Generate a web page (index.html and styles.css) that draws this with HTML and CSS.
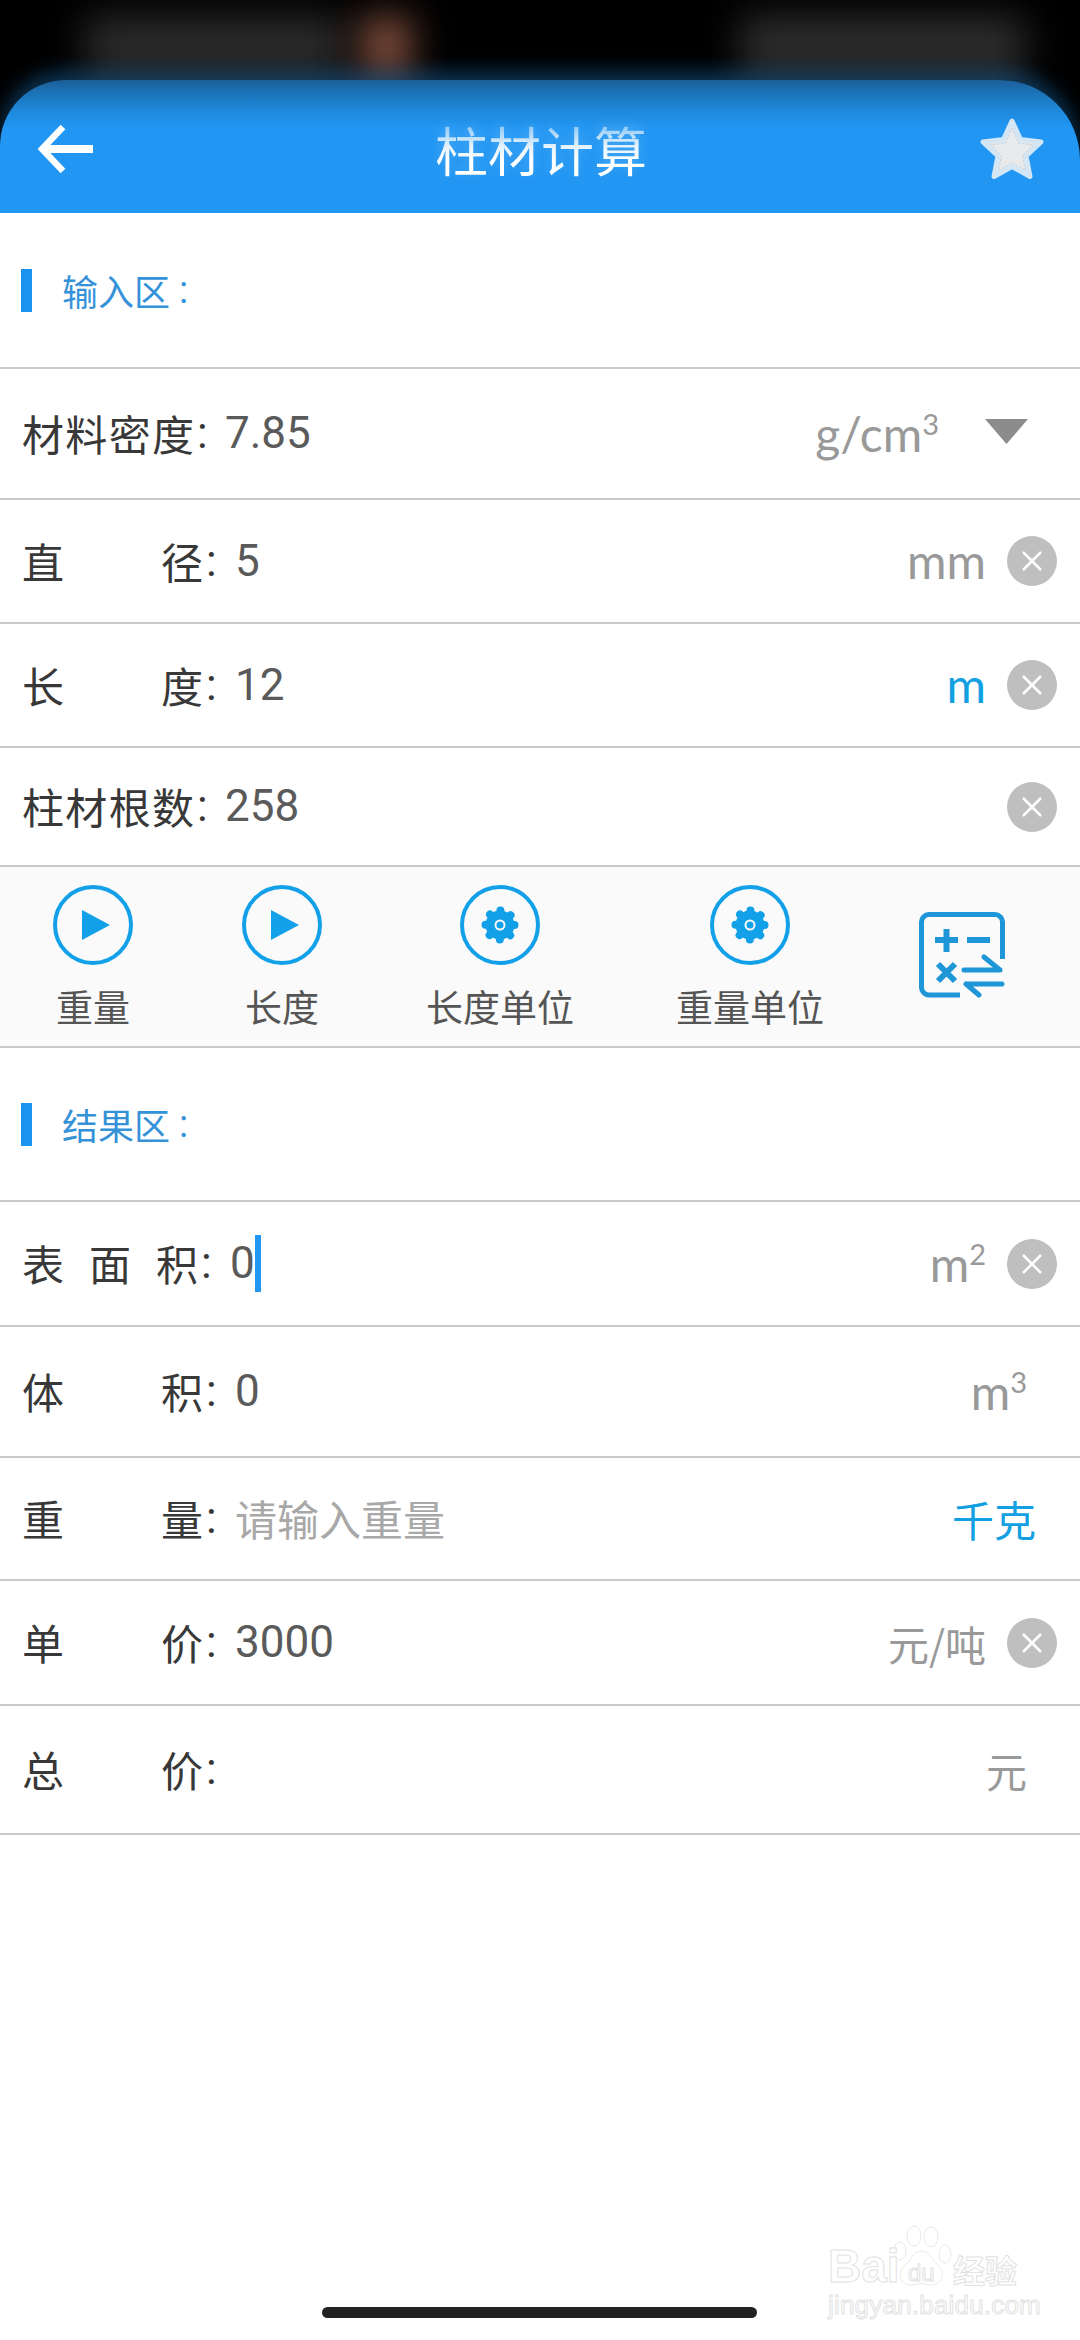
FILE: index.html
```html
<!DOCTYPE html>
<html lang="zh">
<head>
<meta charset="utf-8">
<title>柱材计算</title>
<link rel="stylesheet" href="styles.css">
</head>
<body>
<div class="page">
  <header class="top">
    <span class="blob blob-a"></span>
    <span class="blob blob-b"></span>
    <span class="blob blob-c"></span>
    <div class="bar">
      <svg class="back" viewBox="0 0 56 50"><path d="M25 3 4 25l21 22" fill="none" stroke="#fff" stroke-width="6.500"/><path d="M6 25h49" fill="none" stroke="#fff" stroke-width="8"/></svg>
      <h1 class="title">柱材计算</h1>
      <svg class="star" viewBox="0 0 64 62">
        <path d="M32 3 40.500 21.500 61 24 46 38 50 58.500 32 48.500 14 58.500 18 38 3 24 23.500 21.500Z" fill="#e9eaec" stroke="#d3e6f6" stroke-width="5" stroke-linejoin="round"/>
        <path d="M32 10 38.500 25 54 27 42.500 37.500 45.500 52.500 32 44.500 18.500 52.500 21.500 37.500 10 27 25.500 25Z" fill="none" stroke="#c3d2de" stroke-width="1" stroke-dasharray="2.500 1.500"/>
      </svg>
    </div>
  </header>

  <section class="section"><span class="mark"></span><span class="section-name">输入区</span><span class="section-colon">:</span></section>

  <div class="row h131 bt">
    <span class="label w172">材料密度</span><span class="colon">:</span><span class="value g1">7.85</span>
    <span class="unit end-a">g/cm<sup>3</sup></span>
    <svg class="tri" viewBox="0 0 43 25"><path d="M0 0h43L21.500 25Z" fill="#8c8c8c"/></svg>
  </div>
  <div class="row h124 bt">
    <span class="label w181">直径</span><span class="colon">:</span><span class="value g2">5</span>
    <span class="unit">mm</span><span class="clear"><svg viewBox="0 0 50 50"><path d="M16 16l18 18M34 16 16 34"/></svg></span>
  </div>
  <div class="row h124 bt">
    <span class="label w181">长度</span><span class="colon">:</span><span class="value g2">12</span>
    <span class="unit blue">m</span><span class="clear"><svg viewBox="0 0 50 50"><path d="M16 16l18 18M34 16 16 34"/></svg></span>
  </div>
  <div class="row h119 bt">
    <span class="label w172">柱材根数</span><span class="colon">:</span><span class="value g1">258</span>
    <span class="clear solo"><svg viewBox="0 0 50 50"><path d="M16 16l18 18M34 16 16 34"/></svg></span>
  </div>

  <nav class="tools">
    <div class="tool">
      <svg class="ring" viewBox="0 0 80 80"><circle cx="40" cy="40" r="38" class="ring-line"/><path d="M29 25 57 40 29 55Z" class="ring-fill"/></svg>
      <span>重量</span>
    </div>
    <div class="tool">
      <svg class="ring" viewBox="0 0 80 80"><circle cx="40" cy="40" r="38" class="ring-line"/><path d="M29 25 57 40 29 55Z" class="ring-fill"/></svg>
      <span>长度</span>
    </div>
    <div class="tool">
      <svg class="ring" viewBox="0 0 80 80"><circle cx="40" cy="40" r="38" class="ring-line"/><circle cx="40" cy="40" r="14.500" class="teeth"/><circle cx="40" cy="40" r="10" class="gear"/><circle cx="40" cy="40" r="3.500" class="ring-fill"/></svg>
      <span>长度单位</span>
    </div>
    <div class="tool">
      <svg class="ring" viewBox="0 0 80 80"><circle cx="40" cy="40" r="38" class="ring-line"/><circle cx="40" cy="40" r="14.500" class="teeth"/><circle cx="40" cy="40" r="10" class="gear"/><circle cx="40" cy="40" r="3.500" class="ring-fill"/></svg>
      <span>重量单位</span>
    </div>
    <svg class="calc" viewBox="0 0 86 86" fill="none" stroke="#1e96d8" stroke-width="5">
      <path d="M41 83H10a7.500 7.500 0 0 1-7.500-7.500V10A7.500 7.500 0 0 1 10 2.500h66a7.500 7.500 0 0 1 7.500 7.500v37"/>
      <path d="M16 28h23M27.500 17v23M48 28h23M19 52l17 17M36 52 19 69" stroke-width="6"/>
      <path d="M45 58h36L65 45M47 72h36M47 72l13 11" stroke-linecap="round" stroke-linejoin="round"/>
    </svg>
  </nav>

  <section class="section bt"><span class="mark"></span><span class="section-name">结果区</span><span class="section-colon">:</span></section>

  <div class="row h125 bt">
    <span class="label w176">表面积</span><span class="colon">:</span><span class="value g2">0</span><span class="caret"></span>
    <span class="unit">m<sup>2</sup></span><span class="clear"><svg viewBox="0 0 50 50"><path d="M16 16l18 18M34 16 16 34"/></svg></span>
  </div>
  <div class="row h131 bt">
    <span class="label w181">体积</span><span class="colon">:</span><span class="value g2">0</span>
    <span class="unit end-b">m<sup>3</sup></span>
  </div>
  <div class="row h123 bt">
    <span class="label w181">重量</span><span class="colon">:</span><span class="value g2 hint">请输入重量</span>
    <span class="unit cjk blue end-c">千克</span>
  </div>
  <div class="row h125 bt">
    <span class="label w181">单价</span><span class="colon">:</span><span class="value g2">3000</span>
    <span class="unit cjk">元/吨</span><span class="clear"><svg viewBox="0 0 50 50"><path d="M16 16l18 18M34 16 16 34"/></svg></span>
  </div>
  <div class="row h131 bt bb">
    <span class="label w181">总价</span><span class="colon">:</span>
    <span class="unit cjk end-b">元</span>
  </div>

  <div class="mark-logo">
    <svg class="paw" viewBox="0 0 120 124">
      <ellipse cx="14" cy="52" rx="12" ry="18"/><ellipse cx="42" cy="22" rx="14" ry="20"/><ellipse cx="76" cy="24" rx="14" ry="20"/><ellipse cx="104" cy="58" rx="12" ry="18"/>
      <path d="M58 52c16 0 20 20 34 30 14 12 6 38-16 38-8 0-12-3-19-3-8 0-13 4-24 3-20-2-24-26-10-38 14-10 15-30 35-30Z"/>
    </svg>
    <span class="bd">Bai</span><span class="du">du</span><span class="jy">经验</span>
    <span class="url">jingyan.baidu.com</span>
  </div>
  <div class="home"></div>
</div>
</body>
</html>
```
FILE: styles.css
```css
* { box-sizing: border-box; }
html, body { margin: 0; padding: 0; background: #fff; }
body { font-family: "Noto Sans CJK SC", sans-serif; }
.page { position: relative; width: 1080px; height: 2340px; overflow: hidden; background: #fff; }

.top { position: relative; height: 213px; background: #000; padding-top: 80px; overflow: hidden; }
.blob { position: absolute; top: 16px; height: 62px; filter: blur(18px); }
.blob-a { left: 85px; width: 260px; background: #2a2a2a; }
.blob-b { left: 360px; width: 52px; background: #7a4a3a; }
.blob-c { left: 740px; width: 285px; background: #2c2c2c; }
.bar {
  position: relative; display: grid; grid-template-columns: 1fr auto 1fr; align-items: center;
  height: 133px; padding: 4px 36px 0 38px;
  border-radius: 66px 80px 0 0;
  background: linear-gradient(#1b5f98 0, #1c74ba 14px, #1e88da 30px, #2196f3 48px);
  box-shadow: 0 -10px 18px rgba(33, 150, 243, .32);
}
.back { width: 56px; height: 50px; }
.title { margin: 0; font-size: 53px; font-weight: 400; line-height: 62px; text-align: center;
  background: linear-gradient(#82c2f5 8%, #e4f2fd 45%, #fff 70%); -webkit-background-clip: text; background-clip: text; -webkit-text-fill-color: transparent;
  filter: drop-shadow(0 -3px 6px rgba(255, 255, 255, .2)); }
.star { width: 64px; height: 62px; justify-self: end; }

.section { display: flex; align-items: center; height: 154px; padding-left: 21px; }
.mark { width: 11px; height: 43px; background: #1a94f0; }
.section-name { margin-left: 30px; font-size: 36px; line-height: 43px; color: #3592d8; }
.section-colon { margin-left: 9px; font-family: "Roboto", sans-serif; font-size: 38px; line-height: 43px; color: #3592d8; }

.bt { border-top: 2px solid #c9c9c9; }
.bb { border-bottom: 2px solid #c9c9c9; }
.row { display: flex; align-items: center; padding: 0 23px 0 22px; font-size: 42px; color: #383838; }
.h119 { height: 119px; } .h123 { height: 123px; } .h124 { height: 124px; }
.h125 { height: 125px; } .h131 { height: 131px; }

.label { display: inline-block; text-align: justify; text-align-last: justify; line-height: 1.2; }
.w172 { width: 172px; } .w176 { width: 176px; } .w181 { width: 181px; }
.colon { width: 12px; margin-left: 3px; font-family: "Roboto", sans-serif; font-size: 44px; line-height: 1.2; }
.value { font-family: "Roboto", "Noto Sans CJK SC", sans-serif; font-size: 44px; line-height: 1.2; color: #5a5a5a; }
.g1 { margin-left: 16px; } .g2 { margin-left: 17px; }
.hint { color: #a8a8a8; font-family: "Noto Sans CJK SC", sans-serif; font-size: 42px; }
.caret { width: 6px; height: 57px; background: #2196f3; }

.unit { margin-left: auto; font-family: "Lato", "Noto Sans CJK SC", sans-serif; font-size: 48px; line-height: 50px; color: #999; }
.unit sup { font-size: 29px; line-height: 0; vertical-align: 17px; }
.cjk { font-family: "Noto Sans CJK SC", sans-serif; font-size: 41px; }
.blue { color: #12a0e2; }
.end-a { margin-right: 46px; }
.end-b { margin-right: 30px; }
.end-c { margin-right: 21px; font-size: 42px; }
.tri { width: 43px; height: 25px; margin-right: 29px; margin-top: -4px; }
.clear { width: 50px; height: 50px; margin-left: 21px; border-radius: 50%; background: #bfbfbf; flex: none; }
.clear svg { display: block; width: 50px; height: 50px; fill: none; stroke: #fff; stroke-width: 2.500; }
.clear.solo { margin-left: auto; }

.tools {
  display: grid; grid-template-columns: 186px 192px 244px 256px 168px; align-items: start; justify-items: center;
  height: 181px; padding-top: 18px; background: #fafafa;
  border-top: 2px solid #c9c9c9;
}
.tool { display: flex; flex-direction: column; align-items: center; font-size: 37px; line-height: 44px; color: #555; }
.tool span { margin-top: 19px; white-space: nowrap; }
.ring { width: 80px; height: 80px; }
.ring-line { fill: none; stroke: #12a0e8; stroke-width: 4; }
.ring-fill { fill: #12a0e8; }
.teeth { fill: none; stroke: #12a0e8; stroke-width: 8; stroke-linecap: round; stroke-dasharray: .01 11.377; }
.gear { fill: none; stroke: #12a0e8; stroke-width: 9; }
.calc { width: 86px; height: 86px; margin-top: 27px; }

.mark-logo { position: absolute; left: 828px; top: 2225px; width: 200px; height: 95px; color: #fff; }
.mark-logo span { position: absolute; font-family: "Liberation Sans", sans-serif; -webkit-text-stroke: 1px #e2e2e2; white-space: nowrap; }
.paw { position: absolute; left: 65px; top: 0; width: 60px; height: 62px; fill: #fff; stroke: #e2e2e2; stroke-width: 1.500; }
.bd { left: 0; top: 18px; font-size: 46px; font-weight: 700; line-height: 46px; }
.du { left: 80px; top: 34px; font-size: 24px; line-height: 28px; }
.jy { left: 125px; top: 26px; font-size: 32px; line-height: 36px; font-weight: 700; }
.mark-logo .jy { font-family: "Noto Sans CJK SC", sans-serif; }
.url { left: 0; top: 66px; font-size: 26px; line-height: 28px; letter-spacing: .2px; }

.home { position: absolute; left: 322px; top: 2307px; width: 435px; height: 11px; border-radius: 6px; background: #222; }
```
